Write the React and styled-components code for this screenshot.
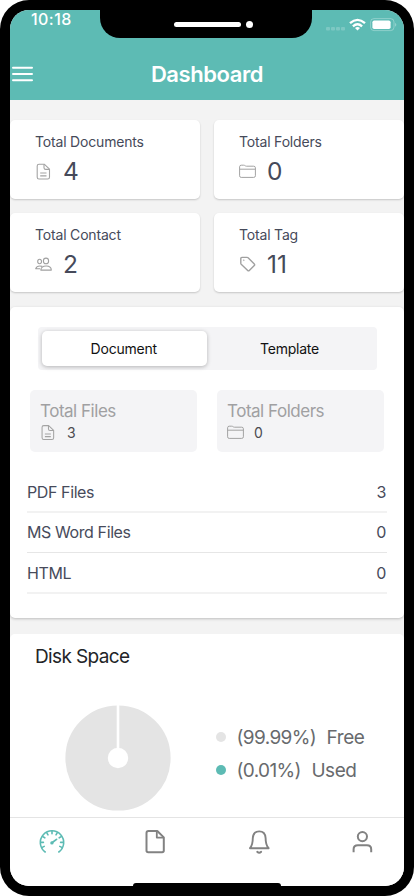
import React from 'react';
import styled, { createGlobalStyle } from 'styled-components';

const TEAL = '#5dbbb4';

const Global = createGlobalStyle`
  * { box-sizing: border-box; }
  body { margin: 0; background: #fff; font-family: Inter, "Liberation Sans", sans-serif; }
  svg { display: block; flex: none; }
`;

const Phone = styled.main`
  width: 414px;
  height: 896px;
  padding: 10px;
  background: #000;
  border-radius: 29px;
  overflow: hidden;
`;

const Screen = styled.div`
  position: relative;
  display: flex;
  flex-direction: column;
  height: 876px;
  background: #f3f3f3;
  border-radius: 19px;
  overflow: hidden;
`;

const Notch = styled.div`
  position: absolute;
  top: 0;
  left: 90px;
  width: 212px;
  height: 28px;
  padding: 0 59px 0 74px;
  display: flex;
  align-items: center;
  justify-content: space-between;
  background: #000;
  border-radius: 0 0 20px 20px;
`;

const Speaker = styled.div`
  width: 67px;
  height: 5px;
  border-radius: 3px;
  background: #fff;
`;

const Camera = styled.div`
  width: 7px;
  height: 7px;
  border-radius: 50%;
  background: #fff;
`;

const HomeIndicator = styled.div`
  position: absolute;
  bottom: 0;
  left: 123px;
  width: 148px;
  height: 3px;
  background: #000;
  border-radius: 3px 3px 0 0;
`;

const Header = styled.header`
  flex: none;
  height: 90px;
  background: ${TEAL};
  color: #fff;
`;

const StatusBar = styled.div`
  display: flex;
  justify-content: space-between;
  height: 38px;
  padding: 0 7px 0 21px;
`;

const Clock = styled.span`
  font-size: 16px;
  font-weight: 500;
  line-height: 18px;
  letter-spacing: 0.45px;
`;

const TitleBar = styled.div`
  display: grid;
  grid-template-columns: 60px 1fr 60px;
  align-items: center;
  height: 52px;
`;

const MenuButton = styled.button`
  padding: 0 0 0 2px;
  border: 0;
  background: none;
`;

const Title = styled.h1`
  margin: 0;
  font-size: 22px;
  font-weight: 600;
  line-height: 52px;
  letter-spacing: -0.42px;
  text-align: center;
`;

const Stats = styled.section`
  flex: none;
  display: grid;
  grid-template-columns: 190px 190px;
  grid-auto-rows: 79px;
  gap: 14px;
  padding: 20px 0 15px;
`;

const Card = styled.article`
  padding: 12px 25px;
  background: #fff;
  border-radius: 5px;
  box-shadow: 0 1px 2px rgba(0, 0, 0, 0.19);
`;

const CardLabel = styled.div`
  font-size: 14px;
  line-height: 20px;
  color: #464a5a;
  letter-spacing: -0.18px;
`;

const CardRow = styled.div`
  display: flex;
  align-items: center;
  gap: 11px;
  height: 38px;
`;

const CardValue = styled.span`
  font-size: 24.5px;
  line-height: 38px;
  color: #464a5a;
`;

const Panel = styled.section`
  flex: none;
  height: 311px;
  padding: 20px 17px 0;
  background: #fff;
  border-radius: 5px;
  box-shadow: 0 1px 3px rgba(0, 0, 0, 0.22);
`;

const Segmented = styled.div`
  display: grid;
  grid-template-columns: 165px 165px;
  width: 339px;
  height: 43px;
  margin-left: 11px;
  padding: 4px;
  background: #f4f4f6;
  border-radius: 4px;
`;

const Segment = styled.button`
  height: 35px;
  padding: ${(p) => (p.$active ? '0 1.5px 0 0' : '0')};
  border: 0;
  border-radius: 5px;
  background: ${(p) => (p.$active ? '#fff' : 'transparent')};
  box-shadow: ${(p) => (p.$active ? '0 1px 4px rgba(0,0,0,.27)' : 'none')};
  font-family: inherit;
  font-size: 14px;
  letter-spacing: -0.22px;
  color: #111;
`;

const Tiles = styled.div`
  display: grid;
  grid-template-columns: 167px 167px;
  gap: 20px;
  padding: 20px 3px;
`;

const Tile = styled.div`
  height: 62px;
  padding: 10px;
  background: #f4f4f6;
  border-radius: 5px;
`;

const TileLabel = styled.div`
  font-size: 17px;
  line-height: 22px;
  letter-spacing: -0.48px;
  color: #a0a0a2;
`;

const TileRow = styled.div`
  display: flex;
  align-items: center;
  gap: ${(p) => p.$gap}px;
  height: 20px;
  font-size: 14px;
  color: #4b4b50;
`;

const FileRow = styled.div`
  display: flex;
  justify-content: space-between;
  height: ${(p) => p.$height}px;
  font-size: 16px;
  line-height: ${(p) => (p.$thin ? 39 : 40)}px;
  letter-spacing: -0.4px;
  color: #474b5b;
  border-bottom: ${(p) => (p.$thin ? '1px solid #e6e6e6' : '2px solid #f2f2f2')};
`;

const FileCount = styled.span`
  padding-right: 1px;
`;

const DiskPanel = styled.section`
  flex: 1;
  margin-top: 16px;
  background: #fff;
  border-radius: 5px 5px 0 0;
`;

const DiskTitle = styled.h2`
  margin: 0;
  padding: 10px 25px 0;
  font-size: 19px;
  font-weight: 400;
  line-height: 26px;
  letter-spacing: -0.62px;
  color: #222427;
`;

const DiskBody = styled.div`
  display: flex;
  align-items: flex-start;
  gap: 45px;
  padding: 35px 0 0 55px;
`;

const Legend = styled.div`
  padding-top: 15px;
`;

const LegendItem = styled.div`
  display: grid;
  grid-template-columns: 10px auto auto;
  justify-content: start;
  align-items: center;
  column-gap: 10.5px;
  height: 33px;
  font-size: 19px;
  line-height: 25px;
  letter-spacing: -0.62px;
  color: #686a6d;
`;

const LegendText = styled.span`
  padding-top: 2px;
  letter-spacing: ${(p) => (p.$label ? '-0.45px' : 'inherit')};
`;

const Dot = styled.i`
  width: 10px;
  height: 10px;
  border-radius: 50%;
  background: ${(p) => p.$color};
`;

const TabBar = styled.nav`
  flex: none;
  display: flex;
  justify-content: space-between;
  height: 69px;
  padding: 10px 28px 0;
  background: #fff;
  border-top: 1px solid #e4e4e4;
`;

const Tab = styled.button`
  width: 28px;
  height: 28px;
  padding: 0;
  border: 0;
  background: none;
  color: ${(p) => (p.$active ? TEAL : '#828282')};
`;

const StatusIcons = () => (
  <svg width="74" height="28" viewBox="0 0 74 28" fill="none">
    <g fill="#fff" opacity=".2">
      <rect x="3" y="17" width="4" height="3.5" rx="1" />
      <rect x="8" y="17" width="4" height="3.5" rx="1" />
      <rect x="13" y="17" width="4" height="3.5" rx="1" />
      <rect x="18" y="17" width="4" height="3.5" rx="1" />
    </g>
    <g stroke="#fff" strokeWidth="2.3">
      <path d="M27 13.2Q34.5 6.5 42 13.2" />
      <path d="M29.9 16.4Q34.5 12.2 39.1 16.4" />
    </g>
    <path d="M32 18Q34.5 16 37 18L34.5 20.6Z" fill="#fff" />
    <rect x="47.6" y="8.6" width="23.4" height="12" rx="3.4" stroke="#fff" strokeOpacity=".3" />
    <rect x="49.4" y="10.4" width="18.2" height="8.6" rx="1.8" fill="#fff" />
    <path d="M72.2 12.8Q74.4 14.6 72.2 16.8Z" fill="#fff" opacity=".4" />
  </svg>
);

const DocIcon = ({ width = 17, height = 17 }) => (
  <svg width={width} height={height} viewBox="0 0 17 17" fill="none" stroke="#a3a3a3" strokeWidth="1.1" strokeLinejoin="round">
    <path d="M4 1.2h5.2L14.5 6.2v8q0 1.8-1.8 1.8H4q-1.8 0-1.8-1.8V3Q2.2 1.2 4 1.2Z" />
    <path d="M9 1.3v3.4q0 1.7 1.7 1.7h3.6M5.2 10h6.3M5.2 12.9h6.3" />
  </svg>
);

const FolderIcon = () => (
  <svg width="17" height="17" viewBox="0 0 17 17" fill="none" stroke="#a3a3a3" strokeWidth="1">
    <path d="M.6 3.8Q.6 2.2 2.2 2.2h2.5q.8 0 1.4.5.6.5 1.4.5h7.2q1.7 0 1.7 1.6v8q0 1.6-1.7 1.6H2.2q-1.6 0-1.6-1.6ZM.6 6.2h15.8" />
  </svg>
);

const PeopleIcon = () => (
  <svg width="17" height="17" viewBox="0 0 17 17" fill="none" stroke="#a0a0a0" strokeWidth="1.1" strokeLinejoin="round">
    <ellipse cx="11" cy="4.9" rx="2.6" ry="2.8" />
    <ellipse cx="4.6" cy="5.5" rx="1.9" ry="2.2" />
    <path d="M5.8 14.1q.2-4 5.3-4.1t5.2 4.1Z" />
    <path d="M7.3 10.4Q2 9.1.7 12.7H5" />
  </svg>
);

const TagIcon = () => (
  <svg width="17" height="17" viewBox="0 0 17 17" fill="none" stroke="#a0a0a0" strokeWidth="1.4" strokeLinejoin="round">
    <path d="M1.8 2.5Q1.8 1.4 2.9 1.4h5.2q.6 0 1 .4l6.2 6.1q.8.8 0 1.6l-5 5q-.8.8-1.6 0L2.2 8.3q-.4-.4-.4-1Z" />
    <circle cx="4.8" cy="4.2" r=".4" strokeWidth=".8" />
  </svg>
);

const GaugeIcon = () => (
  <svg width="28" height="28" viewBox="0 0 28 28" fill="none" stroke="currentColor" strokeWidth="1.6" strokeLinecap="round">
    <path d="M7.2 24A11.7 11.7 0 1 1 20.8 24" />
    <path d="M14 3.2v2.6M8.8 4.8l1.2 2.1M4.8 8.6l2 1.2M2.8 14.4h2.6M4.2 19.4l2-1M19.2 4.8L18 6.9M23.2 8.6l-2 1.2M25.2 14.4h-2.6M23.8 19.4l-2-1" />
    <path d="M14 14.8L18.5 11.4" strokeWidth="1.8" />
    <circle cx="13.9" cy="14.9" r="1.7" fill="currentColor" stroke="none" />
  </svg>
);

const FileIcon = () => (
  <svg width="28" height="28" viewBox="0 0 28 28" fill="none" stroke="currentColor" strokeWidth="2" strokeLinejoin="round">
    <path d="M7.5 3h8.8l6.5 6.4v13.1q0 1.7-1.7 1.7H7.2q-1.7 0-1.7-1.7V5q0-2 2-2Z" />
    <path d="M15.8 3v6.6h6.8" strokeWidth="1.8" />
  </svg>
);

const BellIcon = () => (
  <svg width="28" height="28" viewBox="0 0 28 28" fill="none" stroke="currentColor" strokeWidth="1.9" strokeLinecap="round" strokeLinejoin="round">
    <path d="M5 20.2Q7.8 16.8 7.8 10Q8.2 3.4 14.2 3.4T20.6 10Q20.6 16.8 23.6 20.2Z" />
    <path d="M12.2 23.8q2 1.8 4 0" />
  </svg>
);

const UserIcon = () => (
  <svg width="28" height="28" viewBox="0 0 28 28" fill="none" stroke="currentColor" strokeWidth="2">
    <circle cx="14.4" cy="8.6" r="4.6" />
    <path d="M5.6 24.2v-2.9q0-4.1 4.3-4.1h9q4.3 0 4.3 4.1V24.2" />
  </svg>
);

const Donut = () => (
  <svg width="106" height="106" viewBox="0 0 106 106">
    <circle cx="53" cy="53" r="31.4" fill="none" stroke="#e4e4e4" strokeWidth="42.4" />
    <path d="M53 0v45" stroke="#fff" strokeWidth="2.6" />
  </svg>
);

const stats = [
  { label: 'Total Documents', value: 4, icon: <DocIcon /> },
  { label: 'Total Folders', value: 0, icon: <FolderIcon /> },
  { label: 'Total Contact', value: 2, icon: <PeopleIcon /> },
  { label: 'Total Tag', value: 11, icon: <TagIcon /> },
];

const files = [
  { name: 'PDF Files', count: 3, height: 41 },
  { name: 'MS Word Files', count: 0, height: 40, thin: true },
  { name: 'HTML', count: 0, height: 41 },
];

const legend = [
  { share: '(99.99%)', label: 'Free', color: '#e4e4e4' },
  { share: '(0.01%)', label: 'Used', color: TEAL },
];

const tabs = [
  { name: 'Dashboard', icon: <GaugeIcon /> },
  { name: 'Files', icon: <FileIcon /> },
  { name: 'Notifications', icon: <BellIcon /> },
  { name: 'Profile', icon: <UserIcon /> },
];

export default function App() {
  return (
    <Phone>
      <Global />
      <Screen>
        <Header>
          <StatusBar>
            <Clock>10:18</Clock>
            <StatusIcons />
          </StatusBar>
          <TitleBar>
            <MenuButton aria-label="Menu">
              <svg width="22" height="16" viewBox="0 0 22 16" stroke="#fff" strokeWidth="2" strokeLinecap="round">
                <path d="M1 1.8h19M1 8h19M1 14.2h19" />
              </svg>
            </MenuButton>
            <Title>Dashboard</Title>
          </TitleBar>
        </Header>
        <Stats>
          {stats.map((s) => (
            <Card key={s.label}>
              <CardLabel>{s.label}</CardLabel>
              <CardRow>
                {s.icon}
                <CardValue>{s.value}</CardValue>
              </CardRow>
            </Card>
          ))}
        </Stats>
        <Panel>
          <Segmented>
            <Segment $active>Document</Segment>
            <Segment>Template</Segment>
          </Segmented>
          <Tiles>
            <Tile>
              <TileLabel>Total Files</TileLabel>
              <TileRow $gap={11}><DocIcon width={16} height={17} />3</TileRow>
            </Tile>
            <Tile>
              <TileLabel>Total Folders</TileLabel>
              <TileRow $gap={10}><FolderIcon />0</TileRow>
            </Tile>
          </Tiles>
          {files.map((f) => (
            <FileRow key={f.name} $height={f.height} $thin={f.thin}>
              <span>{f.name}</span>
              <FileCount>{f.count}</FileCount>
            </FileRow>
          ))}
        </Panel>
        <DiskPanel>
          <DiskTitle>Disk Space</DiskTitle>
          <DiskBody>
            <Donut />
            <Legend>
              {legend.map((l) => (
                <LegendItem key={l.label}>
                  <Dot $color={l.color} />
                  <LegendText>{l.share}</LegendText>
                  <LegendText $label>{l.label}</LegendText>
                </LegendItem>
              ))}
            </Legend>
          </DiskBody>
        </DiskPanel>
        <TabBar>
          {tabs.map((t, i) => (
            <Tab key={t.name} aria-label={t.name} $active={i === 0}>{t.icon}</Tab>
          ))}
        </TabBar>
        <Notch>
          <Speaker />
          <Camera />
        </Notch>
        <HomeIndicator />
      </Screen>
    </Phone>
  );
}
